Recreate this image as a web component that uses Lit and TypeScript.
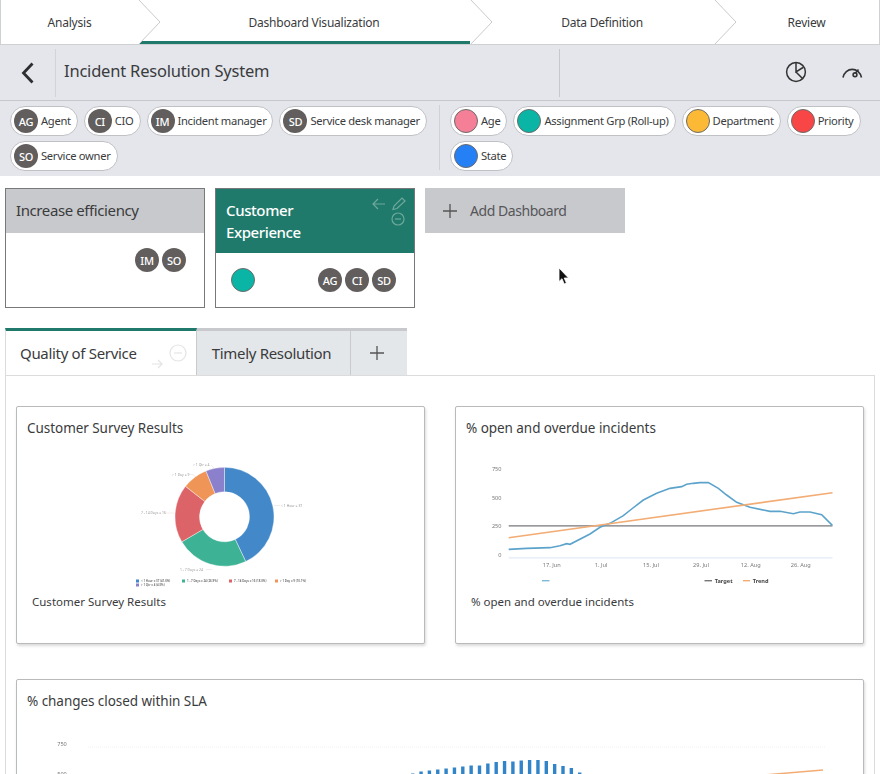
import { LitElement, html, svg, css } from "lit";
import { customElement } from "lit/decorators.js";

const pts = (list: number[][]) => list.map(([x, y]) => `${460 + x / 3},${450 + y / 3}`).join(" ");

const openLine = [[146,298],[200,295],[270,293],[300,287],[320,281],[330,283],[390,252],[420,232],[450,220],[490,197],[515,177],[550,150],[590,130],[630,115],[665,110],[680,103],[700,100],[720,98],[745,98],[775,115],[800,135],[830,157],[870,172],[930,184],[960,184],[1000,191],[1020,186],[1050,186],[1085,194],[1117,226]];

const barTops = [772.5,770.5,769.5,768.5,767.5,766.5,765.5,764.5,764.5,762.5,761,760,760.5,759.5,759,759,760,763,765,767,771.5];

const roles = [
  ["AG", "Agent"],
  ["CI", "CIO"],
  ["IM", "Incident manager"],
  ["SD", "Service desk manager"],
  ["SO", "Service owner"],
];
const fields = [
  ["#f67f98", "Age"],
  ["#0bb5a5", "Assignment Grp (Roll-up)"],
  ["#fcb936", "Department"],
  ["#f84646", "Priority"],
  ["#2580f5", "State"],
];

function arc(cx: number, cy: number, r0: number, r1: number, a0: number, a1: number) {
  const p = (r: number, a: number) => {
    const t = (a * Math.PI) / 180;
    return `${(cx + r * Math.sin(t)).toFixed(2)} ${(cy - r * Math.cos(t)).toFixed(2)}`;
  };
  const big = a1 - a0 > 180 ? 1 : 0;
  return `M${p(r1, a0)}A${r1} ${r1} 0 ${big} 1 ${p(r1, a1)}L${p(r0, a1)}A${r0} ${r0} 0 ${big} 0 ${p(r0, a0)}Z`;
}

@customElement("app-root")
export class AppRoot extends LitElement {
  static styles = css`
    :host {
      display: block;
      height: 774px;
      overflow: hidden;
      position: relative;
      background: #fff;
      color: #3a3b3d;
      font-family: "Noto Sans", sans-serif;
    }
    .steps {
      display: flex;
      height: 45px;
      box-sizing: border-box;
      border: 1px solid #cfd0d2;
      border-top: 0;
      overflow: hidden;
      font-size: 12px;
      letter-spacing: -0.22px;
    }
    .step {
      position: relative;
      display: flex;
      align-items: center;
      justify-content: center;
      box-sizing: border-box;
      padding-left: 20px;
    }
    .step:nth-child(1) { width: 137px; padding-left: 0; }
    .step:nth-child(2) { width: 332px; }
    .step:nth-child(3) { width: 244px; }
    .step:nth-child(4) { flex: 1; }
    .step.active::before {
      content: "";
      position: absolute;
      left: 0;
      right: 0;
      bottom: 0;
      height: 3px;
      background: #1f7a6b;
    }
    .tip {
      position: absolute;
      top: 0;
      right: -24px;
      width: 24px;
      height: 44px;
      z-index: 1;
    }
    .head {
      display: flex;
      align-items: center;
      height: 56px;
      box-sizing: border-box;
      background: #e4e6eb;
      border-bottom: 1px solid #c6c8cb;
    }
    .back {
      width: 55px;
      height: 48px;
      display: flex;
      align-items: center;
      justify-content: center;
      border-right: 1px solid #d2d4d8;
    }
    .title {
      width: 504px;
      height: 48px;
      line-height: 44px;
      padding-left: 8px;
      box-sizing: border-box;
      border-right: 1px solid #c6c8cb;
      font-size: 16.5px;
      letter-spacing: -0.2px;
    }
    .tools {
      flex: 1;
      display: flex;
      justify-content: flex-end;
      align-items: center;
      gap: 32px;
      padding: 0 16px 2px 0;
    }
    .filters {
      display: flex;
      height: 75px;
      background: #e4e6eb;
      box-sizing: border-box;
    }
    .chips {
      display: flex;
      flex-wrap: wrap;
      align-content: flex-start;
      gap: 5px 6px;
      padding: 5px 10px 0;
      box-sizing: border-box;
    }
    .chips.roles { width: 440px; position: relative; }
    .chips.roles::after {
      content: "";
      position: absolute;
      right: 0;
      top: 4px;
      bottom: 6px;
      width: 1px;
      background: #cfd1d5;
    }
    .chips.fields { flex: 1; }
    .chip {
      display: flex;
      align-items: center;
      gap: 3px;
      height: 30px;
      box-sizing: border-box;
      padding: 0 6px 0 3px;
      background: #fff;
      border: 1px solid #bfc1c4;
      border-radius: 15px;
      font-size: 11.2px;
      letter-spacing: -0.3px;
    }
    .chip span.name { margin-top: -2px; }
    .badge {
      flex: none;
      width: 24px;
      height: 24px;
      border-radius: 50%;
      background: #625e5e;
      color: #fff;
      display: flex;
      align-items: center;
      justify-content: center;
      font-size: 11px;
      font-weight: 500;
      letter-spacing: -0.3px;
    }
    .dot {
      flex: none;
      width: 24px;
      height: 24px;
      box-sizing: border-box;
      border-radius: 50%;
      border: 1px solid #6b6b6b;
    }
    .boards {
      display: flex;
      align-items: flex-start;
      gap: 10px;
      margin: 12px 0 0 5px;
    }
    .board {
      width: 200px;
      height: 120px;
      box-sizing: border-box;
      border: 1px solid #77787a;
      display: flex;
      flex-direction: column;
    }
    .board-head {
      background: #c8c9cc;
      padding: 0 10px;
      height: 44px;
      line-height: 43px;
      font-size: 15px;
      letter-spacing: -0.4px;
    }
    .board.on .board-head {
      position: relative;
      background: #1f7a6b;
      color: #fff;
      height: 64px;
      line-height: 22px;
      padding-top: 10px;
      box-sizing: border-box;
      font-weight: 500;
    }
    .board-head svg { position: absolute; left: 154px; top: 3px; }
    .board-body {
      flex: 1;
      display: flex;
      align-items: flex-start;
      justify-content: flex-end;
      gap: 3px;
      padding: 15px 18px 0 15px;
    }
    .board-body .dot { margin-right: auto; }
    .add {
      width: 200px;
      height: 45px;
      background: #c8c9cc;
      display: flex;
      align-items: center;
      gap: 12px;
      padding-left: 17px;
      box-sizing: border-box;
      font-size: 14px;
      letter-spacing: -0.45px;
      color: #55565a;
    }
    .tabs {
      display: flex;
      margin: 20px 0 0 5px;
      height: 47px;
      font-size: 15px;
      letter-spacing: -0.32px;
    }
    .tab {
      box-sizing: border-box;
      display: flex;
      align-items: center;
      background: #e3e7e9;
      border-top: 3px solid #c8c9cc;
      border-right: 1px solid #c8cacc;
    }
    .tab.first {
      position: relative;
      width: 192px;
      background: #fff;
      border-top-color: #1f7a6b;
      border-left: 1px solid #dcdcdc;
      border-right: 1px solid #c8cacc;
      padding-left: 14px;
    }
    .tab.first svg { position: absolute; left: 143px; top: 13px; }
    .tab.second { width: 154px; justify-content: center; padding-right: 4px; }
    .tab.third { width: 56px; justify-content: center; border-right: 0; padding-right: 5px; }
    .panel {
      margin: 0 5px;
      box-sizing: border-box;
      height: 500px;
      border: 1px solid #dcdcdc;
      padding: 30px 10px 0;
      display: grid;
      grid-template-columns: 409px 409px;
      grid-auto-rows: min-content;
      column-gap: 30px;
      row-gap: 35px;
      background: #fff;
    }
    .widget {
      box-sizing: border-box;
      height: 238px;
      border: 1px solid #b9babc;
      border-radius: 2px;
      box-shadow: 1px 2px 3px rgba(0, 0, 0, 0.15);
      background: #fff;
    }
    .widget.wide { grid-column: 1 / 3; height: 300px; }
    .widget h3 {
      margin: 0;
      height: 43px;
      line-height: 42px;
      padding-left: 10px;
      font-size: 13.5px;
      font-weight: 400;
      letter-spacing: -0.05px;
    }
    .widget svg { display: block; filter: blur(0.3px); }
    .widget p {
      margin: 3px 0 0 15px;
      font-size: 11.5px;
      line-height: 18px;
    }
    .cursor { position: absolute; left: 558px; top: 267px; }
    text { font-family: "Noto Sans", sans-serif; }
  `;

  private renderChevron() {
    return html`<svg class="tip" viewBox="0 0 24 44"><path d="M0 -1L22 22L0 45Z" fill="#fff"/><path d="M0 -1L22 22L0 45" fill="none" stroke="#c9cacc"/></svg>`;
  }

  private renderDonut() {
    const cx = 224.5, cy = 516.8;
    const slices = [
      ["#4388c9", 0, 154.6],
      ["#3eb295", 154.6, 239.6],
      ["#dc6368", 239.6, 308],
      ["#ef9558", 308, 338],
      ["#8a80cc", 338, 360],
    ] as [string, number, number][];
    const labels = [
      [281, 507, "< 1 Hour = 37", "M274 505.5H280"],
      [180, 570.5, "1 - 7 Days = 24", "M206 569.5H212"],
      [141, 514, "7 - 14 Days = 16", "M166 513H174"],
      [172, 475.5, "> 1 Day = 9", "M189 474.5H193L196 477"],
      [193, 466, "> 1 Qtr = 4", "M211 465L214 468"],
    ] as [number, number, string, string][];
    const legend = [
      [136, 582, "#4388c9", "< 1 Hour = 37 (41.6%)"],
      [182, 582, "#3eb295", "1 - 7 Days = 24 (26.9%)"],
      [229, 582, "#dc6368", "7 - 14 Days = 16 (18.0%)"],
      [275, 582, "#ef9558", "> 1 Day = 9 (10.1%)"],
      [136, 586, "#8a80cc", "> 1 Qtr = 4 (4.5%)"],
    ] as [number, number, string, string][];
    return html`<svg width="407" height="140" viewBox="17 450 407 140">
      ${slices.map(([c, a, b]) => svg`<path d=${arc(cx, cy, 25, 49.5, a, b)} fill=${c} stroke="#fff" stroke-width=".4"/>`)}
      ${labels.map(([x, y, t, d]) => svg`<text x=${x} y=${y} font-size="3.4" fill="#999">${t}</text><path d=${d} fill="none" stroke="#e8d8d0" stroke-width=".5"/>`)}
      ${legend.map(([x, y, c, t]) => svg`<rect x=${x} y=${y - 2.5} width="3" height="3" fill=${c}/><text x=${x + 5} y=${y} font-size="2.9" font-weight="600" fill="#666">${t}</text>`)}
    </svg>`;
  }

  private renderLine() {
    const ys = [["750", 470.5], ["500", 499.5], ["250", 528], ["0", 557]] as [string, number][];
    const xs = [["17. Jun", 551.7], ["1. Jul", 601], ["15. Jul", 651], ["29. Jul", 701], ["12. Aug", 750.7], ["26. Aug", 800.7]] as [string, number][];
    return html`<svg width="407" height="140" viewBox="456 450 407 140">
      ${ys.map(([t, y]) => svg`<text x="501.5" y=${y} font-size="5.6" text-anchor="end" fill="#777">${t}</text>`)}
      <line x1="508.7" x2="832.5" y1="557.8" y2="557.8" stroke="#e3e9f3" stroke-width="1.2"/>
      ${xs.map(([t, x]) => svg`<text x=${x} y="566.8" font-size="5.6" text-anchor="middle" fill="#777">${t}</text>`)}
      <line x1="508.7" x2="832.5" y1="525.8" y2="525.8" stroke="#77777a" stroke-width="1.3"/>
      <polyline points=${pts(openLine)} fill="none" stroke="#5ca3cc" stroke-width="1.6"/>
      <line x1="508.7" x2="832.5" y1="537.7" y2="492.7" stroke="#f2ac74" stroke-width="1.6"/>
      <line x1="542" x2="549.5" y1="580.7" y2="580.7" stroke="#7fb9da" stroke-width="1.4"/>
      <line x1="704.5" x2="712" y1="580.7" y2="580.7" stroke="#77777a" stroke-width="1.4"/>
      <text x="714.7" y="582.8" font-size="5.6" font-weight="700" fill="#444">Target</text>
      <line x1="743" x2="750" y1="580.7" y2="580.7" stroke="#f2ac74" stroke-width="1.4"/>
      <text x="752.7" y="582.8" font-size="5.6" font-weight="700" fill="#444">Trend</text>
    </svg>`;
  }

  private renderBars() {
    return html`<svg width="846" height="170" viewBox="17 722 846 170">
      <text x="62" y="745" font-size="5.6" fill="#777" text-anchor="middle">750</text>
      <text x="62" y="775" font-size="5.6" fill="#777" text-anchor="middle">500</text>
      <line x1="88" x2="825" y1="746" y2="746" stroke="#eeeeee" stroke-width=".8" stroke-dasharray="1 1"/>
      ${barTops.map((y, i) => svg`<rect x=${411 + i * 8.35} y=${y} width="3.4" height=${850 - y} fill="#3284c8"/>`)}
      <line x1="740" x2="823" y1="776" y2="769" stroke="#f2ac74" stroke-width="1.5"/>
    </svg>`;
  }

  render() {
    const step = ["Analysis", "Dashboard Visualization", "Data Definition", "Review"];
    return html`
      <div class="steps">
        ${step.map(
          (s, i) => html`<div class="step ${i === 1 ? "active" : ""}">
            ${s}${i < 3 ? this.renderChevron() : ""}
          </div>`
        )}
      </div>
      <div class="head">
        <div class="back">
          <svg width="14" height="22" viewBox="0 0 14 22"><path d="M11.5 1.5L2.5 11L11.5 20.5" fill="none" stroke="#2d2e30" stroke-width="2.8"/></svg>
        </div>
        <div class="title">Incident Resolution System</div>
        <div class="tools">
          <svg width="24" height="24" viewBox="0 0 24 24" fill="none" stroke="#333" stroke-width="1.5"><circle cx="12" cy="12" r="9.4"/><path d="M12 2.6V12L19 7.5M12 12L18.5 18.5"/></svg>
          <svg width="24" height="24" viewBox="0 0 24 24" fill="none" stroke="#333" stroke-width="1.6"><path d="M3 17.5A9.5 10.5 0 0 1 21.5 17.5"/><path d="M15.5 13L18.5 9.5"/><circle cx="15" cy="14.8" r="1.9"/></svg>
        </div>
      </div>
      <div class="filters">
        <div class="chips roles">
          ${roles.map(([a, n]) => html`<div class="chip"><span class="badge">${a}</span><span class="name">${n}</span></div>`)}
        </div>
        <div class="chips fields">
          ${fields.map(([c, n]) => html`<div class="chip"><span class="dot" style="background:${c}"></span><span class="name">${n}</span></div>`)}
        </div>
      </div>
      <div class="boards">
        <div class="board">
          <div class="board-head">Increase efficiency</div>
          <div class="board-body"><span class="badge">IM</span><span class="badge">SO</span></div>
        </div>
        <div class="board on">
          <div class="board-head">Customer<br />Experience
            <svg width="40" height="36" viewBox="0 0 40 36" fill="none" stroke="#6fa89c" stroke-width="1.2"><path d="M3 12H15M8 7L3 12L8 17"/><path d="M23 17.5L24 14L32 6L35 9L27 16.5Z"/><circle cx="28" cy="27" r="6"/><path d="M25 27H31"/></svg>
          </div>
          <div class="board-body"><span class="dot" style="background:#0bb5a5"></span><span class="badge">AG</span><span class="badge">CI</span><span class="badge">SD</span></div>
        </div>
        <div class="add">
          <svg width="16" height="16" viewBox="0 0 16 16"><path d="M8 1V15M1 8H15" stroke="#555" stroke-width="1.3"/></svg>
          Add Dashboard
        </div>
      </div>
      <div class="tabs">
        <div class="tab first">Quality of Service
          <svg width="44" height="26" viewBox="0 0 44 26" fill="none" stroke="#e4e4e4" stroke-width="1.2"><path d="M3 20H13M9 16L13 20L9 24"/><circle cx="29" cy="9" r="8"/><path d="M25 9H33"/></svg>
        </div>
        <div class="tab second">Timely Resolution</div>
        <div class="tab third"><svg width="14" height="14" viewBox="0 0 14 14"><path d="M7 0V14M0 7H14" stroke="#555" stroke-width="1.3"/></svg></div>
      </div>
      <div class="panel">
        <div class="widget"><h3>Customer Survey Results</h3>${this.renderDonut()}<p>Customer Survey Results</p></div>
        <div class="widget"><h3>% open and overdue incidents</h3>${this.renderLine()}<p>% open and overdue incidents</p></div>
        <div class="widget wide"><h3>% changes closed within SLA</h3>${this.renderBars()}</div>
      </div>
      <svg class="cursor" width="12" height="19" viewBox="0 0 12 19"><path d="M1 1V14.5L4 11.7L6.2 17L8.4 16L6.2 11H10.5Z" fill="#111" stroke="#fff" stroke-width=".8"/></svg>
    `;
  }
}
